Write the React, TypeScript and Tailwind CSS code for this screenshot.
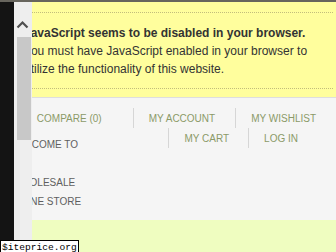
const menuTop = [
  { name: "COMPARE (0)", pad: "pr-[31px]" },
  { name: "MY ACCOUNT", pad: "pr-[20px]" },
  { name: "MY WISHLIST", pad: "pr-[19px]" },
];

const menuBottom = [
  { name: "MY CART", pad: "pr-[19px]" },
  { name: "LOG IN", pad: "pr-[19px]" },
];

function MenuItem({ name, pad }: { name: string; pad: string }) {
  return (
    <a
      href="#"
      className={`flex h-[20px] items-center border-l border-[#d6d6d6] pl-[15px] text-[10px] text-[#8b9a68] ${pad}`}
    >
      {name}
    </a>
  );
}

export default function App() {
  return (
    <div
      className="relative h-[252px] w-[336px] overflow-hidden bg-[#f5f5f5]"
      style={{ fontFamily: '"Liberation Sans", Arial, sans-serif' }}
    >
      <div className="h-[2px] bg-[#67655d]" />

      {/* noscript notice */}
      <div className="bg-[#fffe9d] pb-[8px] pr-[3px] pt-[10px]">
        <div className="border-y border-dotted border-[#c2bd7c] pb-[10px] pl-[24px] pr-[6px] pt-[11px] text-[12px] leading-[18px] text-[#333]">
          <p className="font-bold">JavaScript seems to be disabled in your browser.</p>
          <p>
            You must have JavaScript enabled in your browser to utilize the functionality of
            this website.
          </p>
        </div>
      </div>
      <div className="h-px bg-[#dedede]" />

      {/* header */}
      <div className="pt-[10px]">
        <div className="flex justify-end pr-px">
          {menuTop.map((m) => (
            <MenuItem key={m.name} {...m} />
          ))}
        </div>
        <div className="flex items-start justify-between pb-[9px]">
          <div className="w-[88px] pt-[7px] text-center text-[10px] leading-[19px] text-[#5f5f5f]">
            <div>WELCOME TO</div>
            <div>&nbsp;</div>
            <div>WHOLESALE</div>
            <div>ONLINE STORE</div>
          </div>
          <div className="mr-[19px] flex">
            {menuBottom.map((m) => (
              <MenuItem key={m.name} {...m} />
            ))}
          </div>
        </div>
      </div>
      <div className="h-[40px] bg-[#effdc0]" />

      {/* browser chrome over the page */}
      <div className="absolute left-0 top-[2px] flex h-[250px]">
        <div className="w-[14px] bg-[#141414]" />
        <div className="flex w-[18px] flex-col items-center bg-[#eeeeee]">
          <svg width="18" height="14" viewBox="0 0 18 14" className="mt-[16px]">
            <polyline points="3.5,9.5 8.5,4.5 13.5,9.5" fill="none" stroke="#505050" strokeWidth="2.2" />
          </svg>
          <div className="ml-[1px] mt-[5px] h-[103px] w-[14px] bg-[#c8c8c8]" />
        </div>
      </div>

      <div
        className="absolute left-0 top-[240px] border border-black bg-white px-[1px] text-[9.6px] leading-[13px] text-black"
        style={{ fontFamily: '"Liberation Mono", "DejaVu Sans Mono", monospace' }}
      >
        $iteprice.org
      </div>
    </div>
  );
}
